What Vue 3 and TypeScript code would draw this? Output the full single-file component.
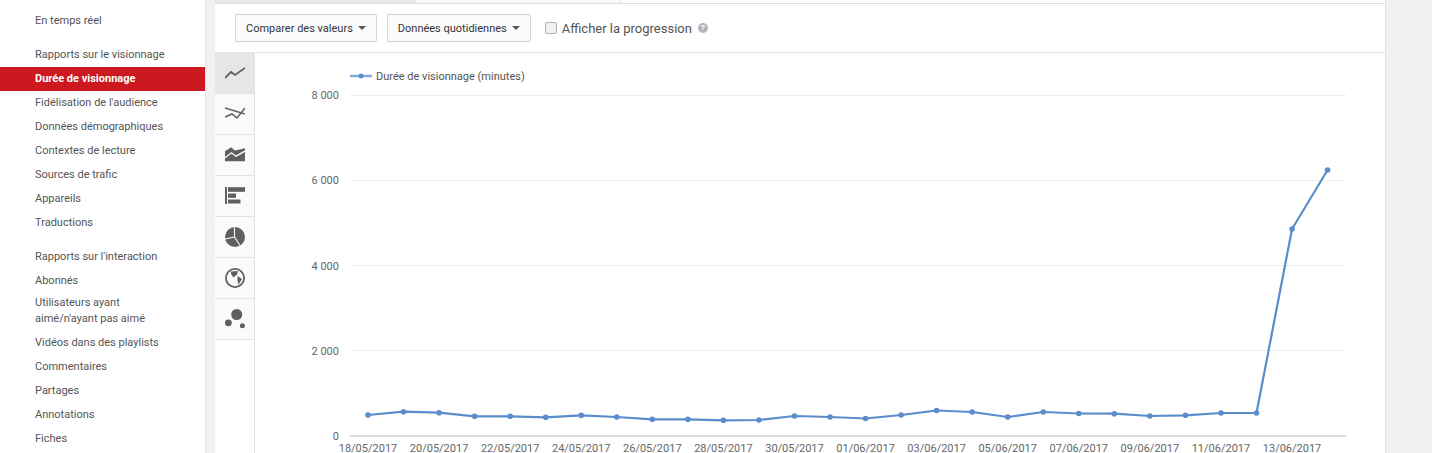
<template>
  <div class="page">
    <aside class="sidebar">
      <div class="nav-group">
        <a class="nav-item">En temps réel</a>
      </div>
      <div v-for="group in navGroups" :key="group.title" class="nav-group">
        <div class="nav-item">{{ group.title }}</div>
        <a
          v-for="item in group.items"
          :key="item"
          class="nav-item"
          :class="{ active: item === activeItem, tall: item.includes('\n') }"
        >{{ item }}</a>
      </div>
    </aside>

    <main class="main">
      <div class="tabs">
        <div class="tab tab-active"></div>
        <div class="tab"></div>
        <div class="tab tab-rest"></div>
      </div>

      <div class="toolbar">
        <button class="drop-button compare">Comparer des valeurs<span class="caret"></span></button>
        <button class="drop-button daily">Données quotidiennes<span class="caret"></span></button>
        <label class="progress">
          <span class="checkbox"></span>
          Afficher la progression
        </label>
        <span class="help">?</span>
      </div>

      <div class="content">
        <div class="rail">
          <div class="rail-cell rail-active">
            <svg width="20" height="20" viewBox="0 0 20 20" fill="none" stroke="#5f5f5f" stroke-width="1.8">
              <path d="M0 15 L6 9 L10 12 L20 5" />
            </svg>
          </div>
          <div class="rail-cell">
            <svg width="20" height="20" viewBox="0 0 20 20" fill="none" stroke="#5f5f5f" stroke-width="1.6">
              <path d="M0 4 L20 10" />
              <path d="M0 13 L7 10 L12 14 L20 4" />
            </svg>
          </div>
          <div class="rail-cell">
            <svg width="20" height="20" viewBox="0 0 20 20">
              <path d="M0 6.2 L6 2.2 L10 5.5 L20 3.2 L20 16.2 L0 16.2 Z" fill="#5f5f5f" />
              <path d="M0 12.8 L6.5 7.8 L11 11.2 L20 6.2" fill="none" stroke="#fafafa" stroke-width="1.4" />
            </svg>
          </div>
          <div class="rail-cell">
            <svg width="20" height="20" viewBox="0 0 20 20" fill="#5f5f5f">
              <rect x="0" y="1" width="2" height="17" />
              <rect x="3" y="1.2" width="17" height="4.6" />
              <rect x="3" y="7.5" width="8" height="4.3" />
              <rect x="3" y="13.5" width="12.5" height="4" />
            </svg>
          </div>
          <div class="rail-cell">
            <svg width="20" height="20" viewBox="0 0 20 20">
              <circle cx="10" cy="10" r="10" fill="#5f5f5f" />
              <path d="M9.5 0 L9.5 10 L0 12 M9.5 10 L15 18.5" fill="none" stroke="#fafafa" stroke-width="1.1" />
            </svg>
          </div>
          <div class="rail-cell">
            <svg width="20" height="20" viewBox="0 0 20 20">
              <circle cx="10" cy="10" r="9.1" fill="none" stroke="#5f5f5f" stroke-width="1.8" />
              <path d="M6 3.5 L13 3 L12 6.5 L8.5 9.5 L6 6 Z" fill="#5f5f5f" />
              <path d="M12.5 8 L17 11 L13.5 16.5 L12.5 12.5 Z" fill="#5f5f5f" />
            </svg>
          </div>
          <div class="rail-cell">
            <svg width="20" height="20" viewBox="0 0 20 20" fill="#5f5f5f">
              <circle cx="11.7" cy="5.5" r="5.5" />
              <circle cx="3.4" cy="13.8" r="3.4" />
              <circle cx="17.4" cy="16.8" r="2.5" />
            </svg>
          </div>
        </div>

        <div class="chart-area">
          <svg class="chart" width="1130" height="400" viewBox="255 53 1130 400">
            <line x1="350" y1="76" x2="372" y2="76" stroke="#7fa6d8" stroke-width="2.4" />
            <circle cx="361" cy="76" r="2.5" fill="#5b8ccb" />
            <text x="376" y="80" class="legend">Durée de visionnage (minutes)</text>

            <g v-for="tick in yTicks" :key="tick.label">
              <line x1="350" :y1="tick.y" x2="1346" :y2="tick.y" :stroke="tick.label === '0' ? '#dcdcdc' : '#eeeeee'" :stroke-width="tick.label === '0' ? 2 : 1" />
              <text x="339" :y="tick.labelY" text-anchor="end" class="axis">{{ tick.label }}</text>
            </g>

            <polyline :points="linePoints" fill="none" stroke="#5b8ccb" stroke-width="2.2" stroke-linejoin="round" />
            <circle v-for="(p, i) in points" :key="i" :cx="p.x" :cy="p.y" r="2.8" fill="#5b8ccb" />

            <text v-for="d in xLabels" :key="d.label" :x="d.x" y="452" text-anchor="middle" class="axis">{{ d.label }}</text>
          </svg>
        </div>
      </div>
    </main>

    <div class="gutter"></div>
  </div>
</template>

<script setup lang="ts">
import { computed } from 'vue'

const activeItem = 'Durée de visionnage'

const navGroups = [
  {
    title: 'Rapports sur le visionnage',
    items: [
      'Durée de visionnage',
      "Fidélisation de l'audience",
      'Données démographiques',
      'Contextes de lecture',
      'Sources de trafic',
      'Appareils',
      'Traductions'
    ]
  },
  {
    title: "Rapports sur l'interaction",
    items: [
      'Abonnés',
      "Utilisateurs ayant\naimé/n'ayant pas aimé",
      'Vidéos dans des playlists',
      'Commentaires',
      'Partages',
      'Annotations',
      'Fiches'
    ]
  }
]

const yTicks = [
  { label: '8 000', y: 95.5, labelY: 99 },
  { label: '6 000', y: 180.5, labelY: 184 },
  { label: '4 000', y: 265.5, labelY: 270 },
  { label: '2 000', y: 350.5, labelY: 355 },
  { label: '0', y: 436, labelY: 440 }
]

// pixel y of each daily value, read off the plot
const values = [
  415, 411.7, 412.7, 416.3, 416.3, 417.3, 415.3, 417, 419.3, 419.3, 420.3, 420, 416, 417,
  418.5, 415, 410.5, 412, 417, 412, 413.5, 413.7, 416, 415.3, 413, 413, 229, 170
]

const startX = 368
const stepX = 35.54

const points = values.map((y, i) => ({ x: startX + i * stepX, y }))
const linePoints = computed(() => points.map((p) => `${p.x},${p.y}`).join(' '))

const dates = [
  '18/05/2017', '20/05/2017', '22/05/2017', '24/05/2017', '26/05/2017', '28/05/2017',
  '30/05/2017', '01/06/2017', '03/06/2017', '05/06/2017', '07/06/2017', '09/06/2017',
  '11/06/2017', '13/06/2017'
]
const xLabels = dates.map((label, i) => ({ label, x: startX + i * 2 * stepX }))
</script>

<style>
html,
body {
  margin: 0;
  overflow: hidden;
}
</style>

<style scoped>
.page {
  display: flex;
  width: 1432px;
  height: 453px;
  overflow: hidden;
  background: #f1f1f1;
  font-family: Roboto, "Liberation Sans", sans-serif;
  color: #555;
}

.sidebar {
  flex: none;
  width: 205px;
  padding-top: 9px;
  background: #fff;
  border-right: 1px solid #e3e3e3;
}

.nav-group {
  margin-bottom: 10px;
}

.nav-item {
  display: block;
  height: 24px;
  padding-left: 35px;
  font-size: 11px;
  line-height: 24px;
  color: #555;
  white-space: pre-line;
}

.nav-item.tall {
  height: 32px;
  padding-top: 2px;
  padding-bottom: 4px;
  line-height: 16px;
}

.nav-item.active {
  background: #cc181e;
  color: #fff;
  font-weight: 700;
}

.main {
  flex: none;
  width: 1170px;
  margin-left: 9px;
  background: #fff;
  border-right: 1px solid #e3e3e3;
}

.tabs {
  display: flex;
  height: 3px;
  border-bottom: 1px solid #dedede;
}

.tab {
  width: 203px;
  background: #f8f8f8;
  border-left: 1px solid #fff;
  border-right: 1px solid #e3e3e3;
}

.tab-active {
  width: 200px;
  background: #e8e8e8;
  border-left: 0;
}

.tab-rest {
  flex: 1;
  border-right: 0;
  background: #fff;
}

.toolbar {
  display: flex;
  align-items: center;
  height: 48px;
  padding-left: 20px;
  border-bottom: 1px solid #e3e3e3;
}

.drop-button {
  display: flex;
  align-items: center;
  box-sizing: border-box;
  height: 28px;
  padding: 0 10px;
  border: 1px solid #d3d3d3;
  border-radius: 2px;
  background: #fbfbfb;
  font-family: inherit;
  font-size: 11px;
  color: #333;
}

.daily {
  margin-left: 10px;
}

.caret {
  margin-left: 5px;
  border-top: 4px solid #555;
  border-left: 4px solid transparent;
  border-right: 4px solid transparent;
}

.progress {
  display: flex;
  align-items: center;
  margin-left: 14px;
  font-size: 13px;
  color: #555;
}

.checkbox {
  box-sizing: border-box;
  width: 12px;
  height: 12px;
  margin-right: 5px;
  border: 1px solid #b0b0b0;
  border-radius: 2px;
  background: #f1f1f1;
}

.help {
  width: 10px;
  height: 10px;
  margin-left: 6px;
  border-radius: 50%;
  background: #b5b5b5;
  color: #fff;
  font-size: 8px;
  line-height: 10px;
  font-weight: 700;
  text-align: center;
}

.content {
  display: flex;
  height: 400px;
}

.rail {
  flex: none;
  width: 39px;
  border-right: 1px solid #e3e3e3;
}

.rail-cell {
  display: flex;
  align-items: center;
  justify-content: center;
  height: 40px;
  background: #fafafa;
  border-bottom: 1px solid #e3e3e3;
}

.rail-active {
  background: #e6e6e6;
}

.chart-area {
  flex: 1;
  min-width: 0;
}

.chart {
  display: block;
}

.legend {
  font-size: 11px;
  fill: #555;
}

.axis {
  font-size: 11px;
  fill: #666;
}
</style>
